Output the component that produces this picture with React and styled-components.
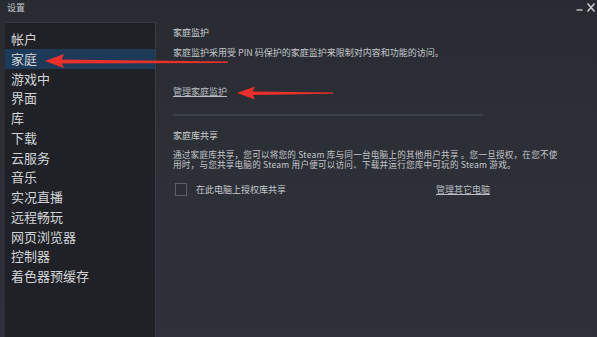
import React from "react";
import styled, { createGlobalStyle } from "styled-components";

const Global = createGlobalStyle`
  html, body { margin: 0; padding: 0; background: #2b2e35; }
  body { font-family: "Noto Sans CJK SC", "Noto Sans", sans-serif; }
`;

const Window = styled.div`
  position: relative;
  width: 597px;
  height: 337px;
  overflow: hidden;
  display: flex;
  flex-direction: column;
  background: linear-gradient(180deg, #282b31 0%, #2c2f36 40%, #2e3139 100%);
  color: #c9cbcf;
`;

const TitleBar = styled.div`
  height: 22px;
  flex: none;
  display: flex;
  align-items: flex-start;
  justify-content: space-between;
  padding: 0 2px 0 7px;
`;

const Title = styled.div`
  font-size: 9px;
  line-height: 10px;
  margin-top: 3px;
  color: #c3c6ca;
`;

const Controls = styled.div`
  display: flex;
  gap: 4px;
  margin-top: 3px;
`;

const Body = styled.div`
  flex: 1;
  display: flex;
  padding-left: 5px;
  min-height: 0;
`;

const Sidebar = styled.nav`
  width: 151px;
  flex: none;
  background: #1f2126;
  border-top: 1px solid #34373e;
  border-right: 1px solid #3a3d44;
  padding-top: 6px;
  box-sizing: border-box;
`;

const NavItem = styled.div`
  height: 19.75px;
  line-height: 19.75px;
  font-size: 13px;
  padding-left: 6px;
  color: #d2d4d7;
  background: ${(p) => (p.$active ? "#1d3a59" : "transparent")};
`;

const Content = styled.main`
  flex: 1;
  padding: 5px 17px 0 17px;
  display: flex;
  flex-direction: column;
  align-items: flex-start;
`;

const Heading = styled.div`
  font-size: 9px;
  line-height: 12px;
  color: #cdcfd2;
  margin-top: ${(p) => p.$mt || 0}px;
`;

const Text = styled.div`
  font-size: 9px;
  line-height: 12px;
  color: #c4c6ca;
  margin-top: ${(p) => p.$mt || 0}px;
  white-space: nowrap;
`;

const Para = styled.div`
  margin-top: 7px;
  display: flex;
  flex-direction: column;
`;

const ParaLine = styled.span`
  font-size: 8.6px;
  line-height: 10px;
  height: 10px;
  color: #c4c6ca;
  white-space: nowrap;
  letter-spacing: 0.2px;
`;

const Link = styled.a`
  font-size: 9px;
  line-height: 12px;
  color: #b9bcc1;
  text-decoration: underline;
  text-underline-offset: 1px;
  margin-top: ${(p) => p.$mt || 0}px;
  cursor: pointer;
`;

const Divider = styled.div`
  width: 310px;
  height: 2px;
  background: #3b3f47;
  margin-top: 16px;
`;

const CheckRow = styled.div`
  display: grid;
  grid-template-columns: 263px auto;
  align-items: center;
  margin-top: 14px;
  width: 100%;
`;

const CheckLabel = styled.label`
  display: flex;
  align-items: center;
  gap: 9px;
  font-size: 9px;
  color: #c4c6ca;
  padding-left: 2px;
`;

const Box = styled.span`
  width: 12px;
  height: 13px;
  box-sizing: border-box;
  border: 1px solid #5b5f67;
  background: #2a2d33;
`;

const Overlay = styled.svg`
  position: absolute;
  left: 0;
  top: 0;
  pointer-events: none;
`;

const items = [
  "帐户", "家庭", "游戏中", "界面", "库", "下载", "云服务", "音乐",
  "实况直播", "远程畅玩", "网页浏览器", "控制器", "着色器预缓存",
];

export default function App() {
  return (
    <>
      <Global />
      <Window>
        <TitleBar>
          <Title>设置</Title>
          <Controls>
            <svg width="7" height="10" viewBox="0 0 7 10">
              <line x1="0.5" y1="7" x2="6.5" y2="7" stroke="#c4c6ca" strokeWidth="1.4" />
            </svg>
            <svg width="8" height="10" viewBox="0 0 8 10">
              <path d="M0.5 0.5 L7.5 8.5 M7.5 0.5 L0.5 8.5" stroke="#d0d2d5" strokeWidth="1.5" />
            </svg>
          </Controls>
        </TitleBar>
        <Body>
          <Sidebar>
            {items.map((t, i) => (
              <NavItem key={t} $active={i === 1}>{t}</NavItem>
            ))}
          </Sidebar>
          <Content>
            <Heading>家庭监护</Heading>
            <Text $mt={8}>家庭监护采用受 PIN 码保护的家庭监护来限制对内容和功能的访问。</Text>
            <Link $mt={27}>管理家庭监护</Link>
            <Divider />
            <Heading $mt={14}>家庭库共享</Heading>
            <Para>
              <ParaLine>通过家庭库共享，您可以将您的 Steam 库与同一台电脑上的其他用户共享 。您一旦授权，在您不使</ParaLine>
              <ParaLine>用时，与您共享电脑的 Steam 用户便可以访问、下载并运行您库中可玩的 Steam 游戏。</ParaLine>
            </Para>
            <CheckRow>
              <CheckLabel>
                <Box />
                在此电脑上授权库共享
              </CheckLabel>
              <Link>管理其它电脑</Link>
            </CheckRow>
          </Content>
        </Body>
        <Overlay width="597" height="337" viewBox="0 0 597 337">
          <path d="M60 59.5 L228 61.5 L228 63 L60 63.5 Z" fill="#e8302c" />
          <path d="M45 61 L64 54 L61 61.5 L64 68 Z" fill="#ec2f2b" />
          <path d="M252 91.5 L333 92.5 L333 93.8 L252 95 Z" fill="#e8302c" />
          <path d="M237 93 L255 86.5 L252 93 L255 99.5 Z" fill="#ec2f2b" />
        </Overlay>
      </Window>
    </>
  );
}
